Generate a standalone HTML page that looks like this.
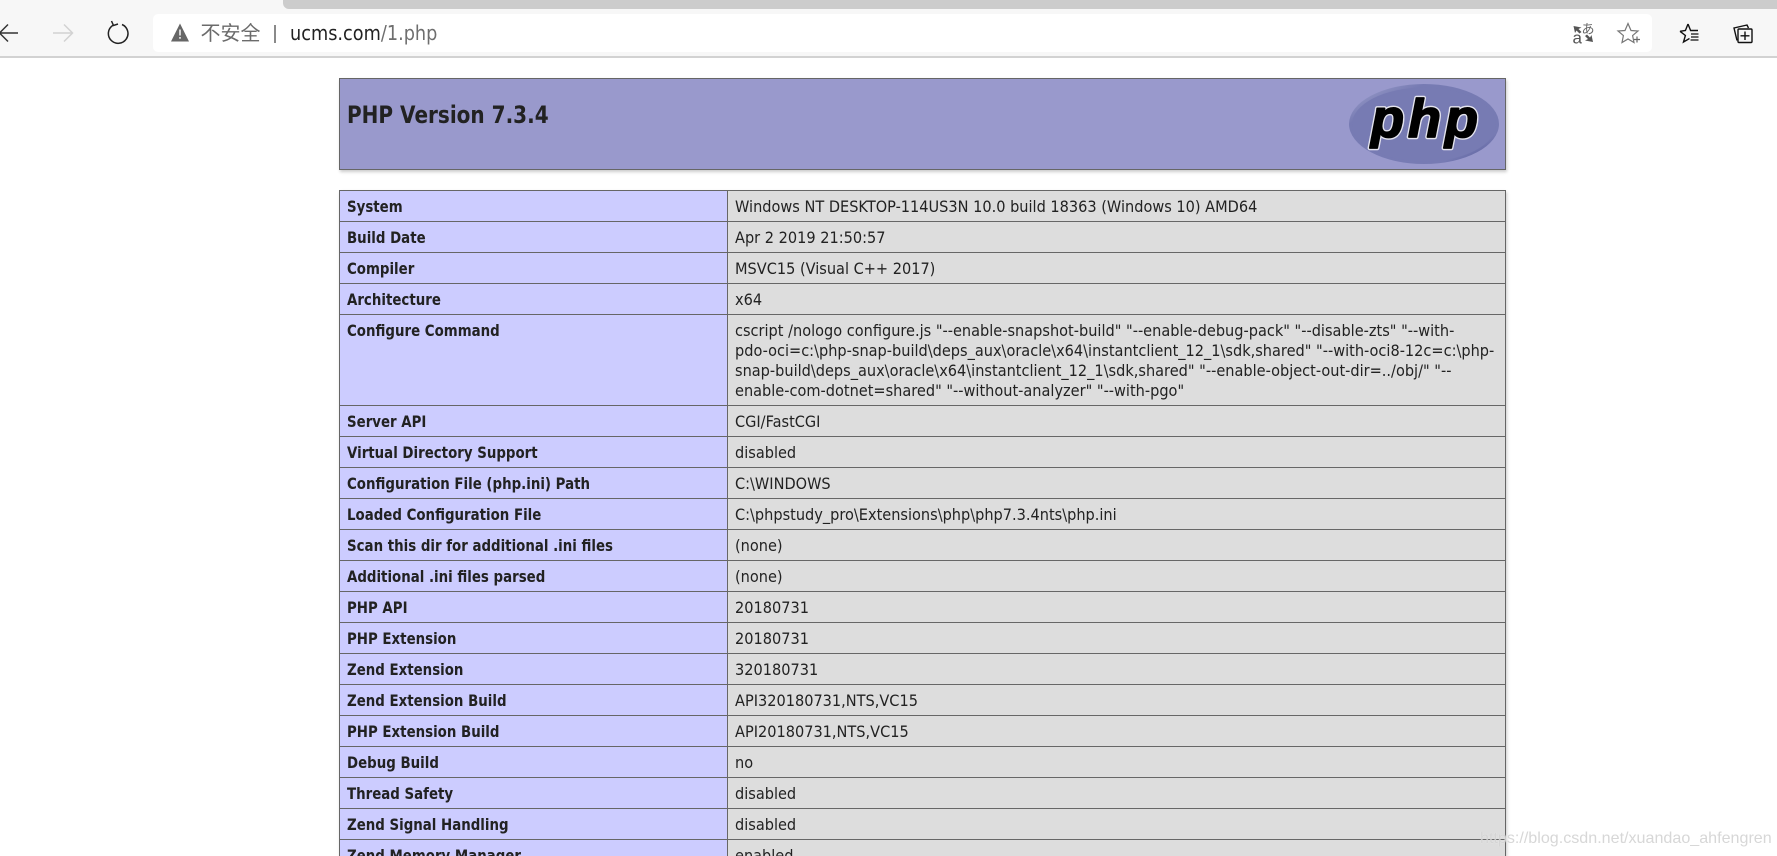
<!DOCTYPE html>
<html><head><meta charset="utf-8"><title>phpinfo()</title>
<style>
html,body{margin:0;padding:0;width:1777px;height:856px;overflow:hidden;background:#fff}
body{position:relative;font-family:"DejaVu Sans","Liberation Sans",sans-serif;color:#222}
.abs{position:absolute}
#tool{left:0;top:0;width:1777px;height:56px;background:#f7f7f7;border-bottom:2px solid #d2d2d2}
#tab{left:283px;top:0;width:1494px;height:9px;background:#ccc;border-bottom-left-radius:6px}
#addr{left:153px;top:14px;width:1499px;height:38px;background:#fff;border-radius:5px}
.cjk{font-family:"Liberation Sans","Noto Sans CJK SC",sans-serif}
#insec{left:200.5px;top:20px;font-size:20px;line-height:28px;color:#6b6b6b}
#sep{left:274px;top:25px;width:2px;height:18px;background:#8a8a8a}
#url{left:290px;top:19px;font:20px/28px "DejaVu Sans",sans-serif;color:#6e6e6e;white-space:nowrap;transform:scaleX(.885);transform-origin:0 50%}
#url b{font-weight:normal;color:#222}
#hdr{left:339px;top:78px;width:1165px;height:90px;background:#99c;border:1px solid #666;box-shadow:1px 2px 3px #ccc}
#ttl{left:347px;top:99px;font-weight:bold;font-size:24px;line-height:32px;color:#222;white-space:nowrap;transform:scaleX(.834);transform-origin:0 50%}
table{position:absolute;left:339px;top:190px;width:1166px;table-layout:fixed;border-collapse:collapse;box-shadow:1px 2px 3px #ccc}
td{border:1px solid #666;padding:6px 7px 4px;height:20px;line-height:20px;font-size:16px;vertical-align:top;color:#222;white-space:nowrap;overflow:hidden}
td:first-child{background:#ccf;font-weight:bold;font-size:15.6px}
td+td{background:#ddd;padding-left:6.5px}
td span{display:block;transform:scaleX(.908);transform-origin:0 50%}
td:first-child span{transform:scaleX(.857)}
#wm{left:1480px;top:824px;font:16.1px/28px "Liberation Sans",sans-serif;color:rgba(205,205,205,.8);text-shadow:0 0 1px rgba(255,255,255,.7);white-space:nowrap}
</style></head><body>
<div class="abs" id="tool"></div>
<div class="abs" id="tab"></div>
<div class="abs" id="addr"></div>
<svg class="abs" style="left:0;top:0" width="153" height="56" fill="none" stroke-width="1.5">
<path d="M18 33H0M8 24.5L-.5 33L8 41.5" stroke="#333"/>
<path d="M53 33H72.5M64 24.5L72.5 33L64 41.5" stroke="#d2d2d2"/>
<path d="M113 25.2A9.8 9.8 0 1 0 122 24.5" stroke="#222"/>
<path d="M111.5 21L113.5 25.5L118 24" stroke="#222"/>
</svg>
<svg class="abs" style="left:165px;top:14px" width="30" height="30">
<path d="M15 9.5L24 27.5H6Z" fill="#666"/>
<path d="M14.2 15.5h1.6v6h-1.6zM14.2 23h1.6v1.8h-1.6z" fill="#eee"/>
</svg>
<div class="abs cjk" id="insec">不安全</div>
<div class="abs" id="sep"></div>
<div class="abs" id="url"><b>ucms.com</b>/1.php</div>
<svg class="abs" style="left:1565px;top:15px" width="85" height="36" fill="none">
<path d="M8.5 11l8 1.5-3 1.5 3 3-2 1.5-3-3-1.5 2.5z" fill="#555"/>
<path d="M28 27l-8-1.5 3-1.5-3-3 2-1.5 3 3 1.500-2.500z" fill="#555"/>
<text x="16.500" y="18.500" font-size="13" fill="#666" font-family="Noto Sans CJK JP,sans-serif">あ</text>
<text x="7.500" y="28.500" font-size="17" fill="#555" font-family="Liberation Sans,sans-serif">a</text>
<path d="M63 8.500L66 15.500L73 16L67.600 20.600L69 27.500L63 24L57 27.500L58.400 20.600L53 16L60 15.500Z" stroke="#777" stroke-width="1.2" fill="#fff"/>
<path d="M69 24.500h6M72 21.500v6" stroke="#666" stroke-width="1.2"/>
</svg>
<svg class="abs" style="left:1670px;top:15px" width="95" height="36" fill="none" stroke="#111" stroke-width="1.4">
<path d="M18 9L20.600 15.500H28M10 16.300L15.400 20.500L13.500 27L19.500 23.500" />
<path d="M18 9L15.400 15.500L10 16.300" />
<path d="M21 19h7.500M21 22h7.500M20.500 25h8" stroke-width="1.3"/>
<path d="M67 25.500L64 13L77 10L78.500 13" />
<rect x="68" y="14" width="14" height="13.500" rx="1"/>
<path d="M75 16.500v8.500M70.500 20.800h9"/>
</svg>
<div class="abs" id="hdr"></div>
<svg class="abs" style="left:1340px;top:78px" width="166" height="92">
<defs><linearGradient id="g" x1="0" y1="0" x2="1" y2="1"><stop offset="0" stop-color="#a3a6cf"/><stop offset=".25" stop-color="#777bb3"/><stop offset=".8" stop-color="#777bb3"/><stop offset="1" stop-color="#4a4f90"/></linearGradient></defs>
<ellipse cx="84" cy="46" rx="75" ry="40" fill="url(#g)"/>
<ellipse cx="84" cy="46.500" rx="72" ry="37" fill="#777bb3"/>
<text x="31" y="59" font-family="Liberation Sans,sans-serif" font-weight="bold" font-style="italic" font-size="54" fill="#000" stroke="#e4e4ee" stroke-width="4.500" stroke-linejoin="round" textLength="107">php</text>
<text x="31" y="59" font-family="Liberation Sans,sans-serif" font-weight="bold" font-style="italic" font-size="54" fill="#000" stroke="#000" stroke-width="1.800" stroke-linejoin="round" textLength="107">php</text>
</svg>
<div class="abs" id="ttl">PHP Version 7.3.4</div>
<table>
<colgroup><col style="width:388px"><col style="width:778px"></colgroup>
<tr><td><span>System</span></td><td><span>Windows NT DESKTOP-114US3N 10.0 build 18363 (Windows 10) AMD64</span></td></tr>
<tr><td><span>Build Date</span></td><td><span>Apr 2 2019 21:50:57</span></td></tr>
<tr><td><span>Compiler</span></td><td><span>MSVC15 (Visual C++ 2017)</span></td></tr>
<tr><td><span>Architecture</span></td><td><span>x64</span></td></tr>
<tr><td><span>Configure Command</span></td><td><span>cscript /nologo configure.js "--enable-snapshot-build" "--enable-debug-pack" "--disable-zts" "--with-</span><span>pdo-oci=c:\php-snap-build\deps_aux\oracle\x64\instantclient_12_1\sdk,shared" "--with-oci8-12c=c:\php-</span><span>snap-build\deps_aux\oracle\x64\instantclient_12_1\sdk,shared" "--enable-object-out-dir=../obj/" "--</span><span>enable-com-dotnet=shared" "--without-analyzer" "--with-pgo"</span></td></tr>
<tr><td><span>Server API</span></td><td><span>CGI/FastCGI</span></td></tr>
<tr><td><span>Virtual Directory Support</span></td><td><span>disabled</span></td></tr>
<tr><td><span>Configuration File (php.ini) Path</span></td><td><span>C:\WINDOWS</span></td></tr>
<tr><td><span>Loaded Configuration File</span></td><td><span>C:\phpstudy_pro\Extensions\php\php7.3.4nts\php.ini</span></td></tr>
<tr><td><span>Scan this dir for additional .ini files</span></td><td><span>(none)</span></td></tr>
<tr><td><span>Additional .ini files parsed</span></td><td><span>(none)</span></td></tr>
<tr><td><span>PHP API</span></td><td><span>20180731</span></td></tr>
<tr><td><span>PHP Extension</span></td><td><span>20180731</span></td></tr>
<tr><td><span>Zend Extension</span></td><td><span>320180731</span></td></tr>
<tr><td><span>Zend Extension Build</span></td><td><span>API320180731,NTS,VC15</span></td></tr>
<tr><td><span>PHP Extension Build</span></td><td><span>API20180731,NTS,VC15</span></td></tr>
<tr><td><span>Debug Build</span></td><td><span>no</span></td></tr>
<tr><td><span>Thread Safety</span></td><td><span>disabled</span></td></tr>
<tr><td><span>Zend Signal Handling</span></td><td><span>disabled</span></td></tr>
<tr><td><span>Zend Memory Manager</span></td><td><span>enabled</span></td></tr>
</table>
<div class="abs" id="wm">https://blog.csdn.net/xuandao_ahfengren</div>
</body></html>
